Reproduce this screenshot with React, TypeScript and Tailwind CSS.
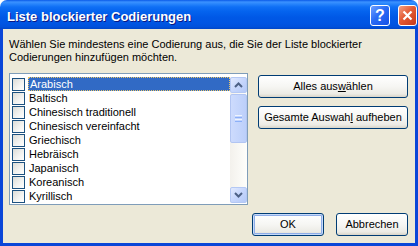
const items = [
	"Arabisch",
	"Baltisch",
	"Chinesisch traditionell",
	"Chinesisch vereinfacht",
	"Griechisch",
	"Hebräisch",
	"Japanisch",
	"Koreanisch",
	"Kyrillisch",
];

function CheckBox() {
	return (
		<div className="w-[13px] h-[13px] shrink-0 border border-[#1c5180] bg-[linear-gradient(135deg,#dcdcd7_0%,#f4f4f2_60%,#ffffff_100%)]" />
	);
}

function Arrow({ up }: { up?: boolean }) {
	return (
		<svg width="9" height="6" viewBox="0 0 9 6">
			<path
				d={up ? "M1 5 L4.5 1.5 L8 5" : "M1 1 L4.5 4.5 L8 1"}
				fill="none"
				stroke="#4d6185"
				strokeWidth="2"
			/>
		</svg>
	);
}

function ScrollButton({ up }: { up?: boolean }) {
	return (
		<div className="h-[16px] flex items-center justify-center rounded-[2px] border border-[#b4c8f4] bg-[linear-gradient(135deg,#e2eafe_0%,#c6d6fc_50%,#b4c9f8_100%)]">
			<Arrow up={up} />
		</div>
	);
}

function XpButton({
	children,
	className = "",
	isDefault,
}: {
	children: React.ReactNode;
	className?: string;
	isDefault?: boolean;
}) {
	return (
		<div
			className={
				"h-[23px] flex items-center justify-center rounded-[3px] border border-[#003c74] bg-[linear-gradient(to_bottom,#ffffff_0%,#f6f6f3_50%,#ecebe5_85%,#d8d4c8_100%)] " +
				(isDefault
					? "shadow-[inset_0_0_0_1px_#c6daf9,inset_0_0_0_2px_#8eade8] "
					: "") +
				className
			}
		>
			<span>{children}</span>
		</div>
	);
}

export default function App() {
	return (
		<div className="w-[418px] h-[246px] flex flex-col overflow-hidden font-['Liberation_Sans',Arial,sans-serif] text-[11px] leading-[13px] text-black">
			{/* Title bar */}
			<div className="h-[29px] shrink-0 flex items-start pl-[7px] pr-[1px] pt-[5px] rounded-t-[7px] bg-[linear-gradient(to_bottom,#0a5ae8_0%,#3b92ff_7%,#2784fb_14%,#0f6ff5_24%,#0463ee_40%,#0058e6_60%,#0055e3_80%,#0051dc_92%,#0046c8_100%)]">
				<span className="mt-[4px] text-[13px] leading-[16px] font-bold text-white [text-shadow:1px_1px_0_#0a1883]">
					Liste blockierter Codierungen
				</span>
				<div className="ml-auto flex gap-[8px]">
					<div className="w-[20px] h-[21px] flex items-center justify-center rounded-[3px] border border-white bg-[linear-gradient(135deg,#6fa0ff_0%,#2a6cf5_45%,#1550e6_100%)] text-white font-bold text-[16px] leading-none">
						?
					</div>
					<div className="w-[19px] h-[21px] flex items-center justify-center rounded-[3px] border border-white bg-[linear-gradient(135deg,#f3a186_0%,#e45a34_45%,#c4391b_100%)]">
						<svg width="11" height="11" viewBox="0 0 11 11">
							<path
								d="M1.5 1.5 L9.5 9.5 M9.5 1.5 L1.5 9.5"
								stroke="white"
								strokeWidth="2.2"
							/>
						</svg>
					</div>
				</div>
			</div>

			{/* Client area */}
			<div className="flex-1 flex flex-col bg-[#ece9d8] border-l-[3px] border-r-[3px] border-b-[3px] border-[#0a46d8] pl-[6px] pr-[7px] pt-[9px]">
				<p>
					Wählen Sie mindestens eine Codierung aus, die Sie der Liste blockierter
					<br />
					Codierungen hinzufügen möchten.
				</p>

				<div className="flex justify-between mt-[9px]">
					{/* List */}
					<div className="w-[239px] h-[132px] flex border border-[#7f9db9] bg-white pt-[3px] pb-[1px] pl-[2px] overflow-hidden">
						<div className="flex-1 flex flex-col overflow-hidden">
							{items.map((item, i) => (
								<div key={item} className="h-[14px] shrink-0 flex items-center">
									<CheckBox />
									<span
										className={
											"ml-[3px] flex-1 h-[14px] flex items-center pl-[1px] " +
											(i === 0
												? "bg-[#316ac5] text-white border border-dotted border-[#e9c56a] pl-0"
												: "")
										}
									>
										{item}
									</span>
								</div>
							))}
						</div>
						<div className="w-[17px] shrink-0 flex flex-col bg-[linear-gradient(to_right,#f3f1ec,#fefefb)]">
							<ScrollButton up />
							<div className="mt-[1px] h-[49px] flex flex-col items-center justify-center gap-[1px] rounded-[2px] border border-[#b2c5f2] bg-[linear-gradient(to_right,#cddbfd,#bccffa)]">
								<div className="w-[7px] h-[1px] bg-[#eef4fe]" />
								<div className="w-[7px] h-[1px] bg-[#8cb0f8]" />
								<div className="w-[7px] h-[1px] bg-[#eef4fe]" />
								<div className="w-[7px] h-[1px] bg-[#8cb0f8]" />
							</div>
							<div className="flex-1" />
							<ScrollButton />
						</div>
					</div>

					{/* Right buttons */}
					<div className="w-[150px] mt-[2px] flex flex-col gap-[8px]">
						<XpButton>
							Alles aus<span className="underline">w</span>ählen
						</XpButton>
						<XpButton>
							Gesamte Auswah<span className="underline">l</span> aufheben
						</XpButton>
					</div>
				</div>

				<div className="flex justify-end gap-[12px] mt-[8px]">
					<XpButton isDefault className="w-[72px] h-[22px]">
						OK
					</XpButton>
					<XpButton className="w-[72px] h-[22px]">Abbrechen</XpButton>
				</div>
			</div>
		</div>
	);
}
